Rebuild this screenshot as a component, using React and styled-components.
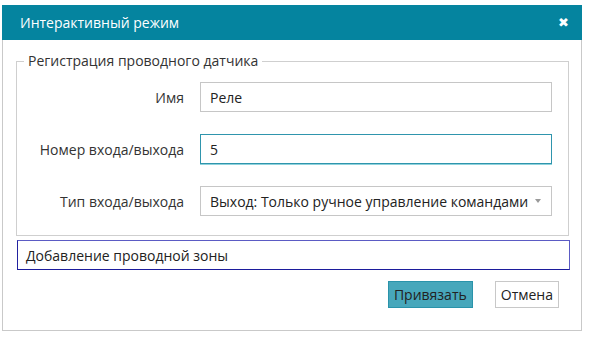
import React from "react";
import styled, { createGlobalStyle } from "styled-components";

const Global = createGlobalStyle`
  html, body { margin: 0; padding: 0; background: #ffffff; }
  body { font-family: "Open Sans", "Noto Sans", sans-serif; color: #222; }
  * { box-sizing: border-box; }
`;

const Page = styled.div`
  width: 600px;
  height: 340px;
  padding: 5px 0 0 2px;
`;

const Dialog = styled.div`
  width: 580px;
  height: 326px;
  border: 1px solid #c9c9c9;
  border-top: none;
  background: #fff;
  display: flex;
  flex-direction: column;
`;

const Header = styled.div`
  height: 35px;
  margin: 0 -1px;
  background: #05849f;
  color: #fff;
  display: flex;
  align-items: center;
  justify-content: space-between;
  padding: 0 13px 0 18px;
  font-size: 14px;
`;

const Close = styled.span`
  font-size: 13px;
  font-weight: 700;
  line-height: 1;
  font-family: "DejaVu Sans", sans-serif;
`;

const Body = styled.div`
  padding: 11px 12px 0 13px;
  display: flex;
  flex-direction: column;
`;

const Fieldset = styled.fieldset`
  margin: 0;
  padding: 11px 15px 19px 0;
  border: 1px solid #cfcfcf;
  min-width: 0;
`;

const Legend = styled.legend`
  margin-left: 7px;
  padding: 0 4px;
  font-size: 14px;
  line-height: 20px;
  color: #333;
`;

const Grid = styled.div`
  display: grid;
  grid-template-columns: 167px 352px;
  column-gap: 16px;
  row-gap: 22px;
  align-items: center;
`;

const Label = styled.label`
  text-align: right;
  font-size: 14px;
  color: #333;
`;

const Field = styled.div`
  height: 30px;
  border: 1px solid ${(p) => (p.$focused ? "#2f95ad" : "#c6c6c6")};
  box-shadow: ${(p) => (p.$focused ? "0 1px 0 #8fd2dc" : "none")};
  display: flex;
  align-items: center;
  justify-content: space-between;
  padding: 0 9px 0 9px;
  font-size: 14px;
  color: #222;
  background: #fff;
`;

const Caret = styled.span`
  width: 0;
  height: 0;
  border-left: 3.5px solid transparent;
  border-right: 3.5px solid transparent;
  border-top: 4px solid #9a9a9a;
  margin-right: 1px;
`;

const Zone = styled.div`
  margin: 4px -1px 0 1px;
  height: 30px;
  border: 1px solid #5b5bc4;
  border-left-color: #2222a0;
  border-bottom-color: #1c1c9c;
  display: flex;
  align-items: center;
  padding-left: 8px;
  font-size: 14px;
  color: #222;
`;

const Actions = styled.div`
  display: flex;
  justify-content: flex-end;
  gap: 22px;
  margin-top: 11px;
  padding-right: 10px;
`;

const Button = styled.button`
  height: 27px;
  padding: 0 ${(p) => (p.$primary ? "5px" : "5px")};
  font-family: inherit;
  font-size: 14px;
  color: #222;
  background: ${(p) => (p.$primary ? "#47a7bb" : "#fff")};
  border: 1px solid ${(p) => (p.$primary ? "#2a93aa" : "#c8c8c8")};
  border-radius: 0;
`;

export default function App() {
  return (
    <>
      <Global />
      <Page>
        <Dialog>
          <Header>
            <span>Интерактивный режим</span>
            <Close>✖</Close>
          </Header>
          <Body>
            <Fieldset>
              <Legend>Регистрация проводного датчика</Legend>
              <Grid>
                <Label>Имя</Label>
                <Field>Реле</Field>
                <Label>Номер входа/выхода</Label>
                <Field $focused>5</Field>
                <Label>Тип входа/выхода</Label>
                <Field>
                  <span>Выход: Только ручное управление командами</span>
                  <Caret />
                </Field>
              </Grid>
            </Fieldset>
            <Zone>Добавление проводной зоны</Zone>
            <Actions>
              <Button $primary>Привязать</Button>
              <Button>Отмена</Button>
            </Actions>
          </Body>
        </Dialog>
      </Page>
    </>
  );
}
